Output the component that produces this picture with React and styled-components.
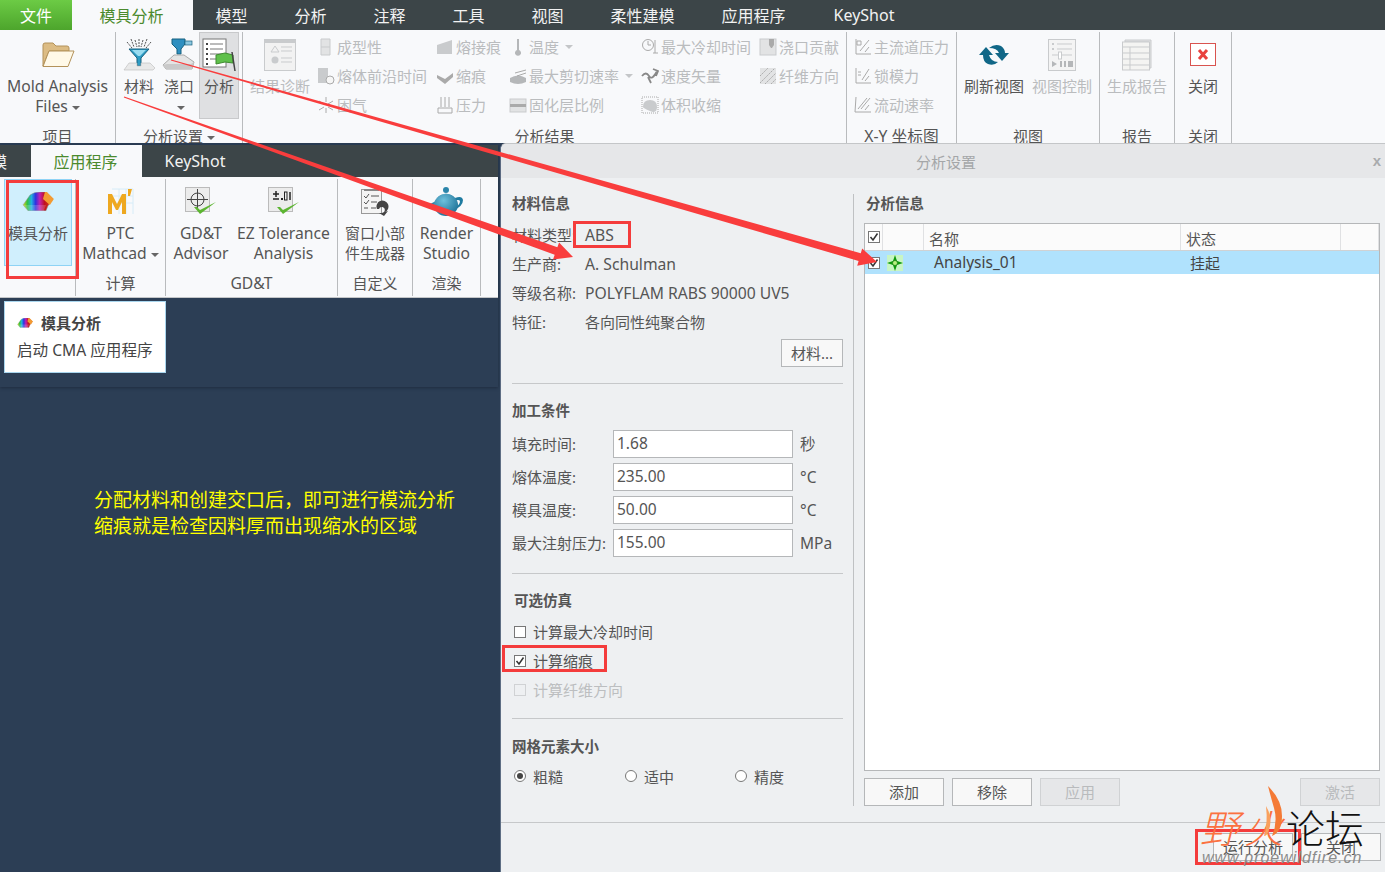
import React from "react";
import styled, { createGlobalStyle } from "styled-components";

const GlobalStyle = createGlobalStyle`
  html, body { margin: 0; padding: 0; background: #2c3e55; }
  body { font-family: "Noto Sans", "Noto Sans CJK SC", sans-serif; color: #555; }
  * { box-sizing: border-box; }
`;

/* ---------- icons ---------- */

const G1 = "#c9cbcd";
const G2 = "#e2e3e4";

function FolderIcon() {
  return (
    <svg width="34" height="26" viewBox="0 0 34 26">
      <path d="M2 24V3q0-2 2-2h8l3 3h11q2 0 2 2v3H8z" fill="#dcbc84" stroke="#b3925a" />
      <path d="M2 24.5 8 9h25l-6 15.500z" fill="#fff9e8" stroke="#b3925a" />
    </svg>
  );
}

function FunnelIcon() {
  return (
    <svg width="34" height="34" viewBox="0 0 34 34">
      <path d="M9 1l3 8M13 2l2 7M17 1v8M21 2l-2 7M25 1l-3 8M5 4l5 6M29 4l-5 6" stroke="#555" strokeWidth="1" strokeDasharray="2 1" />
      <path d="M7 11h20l-8 9v8h-4v-8z" fill="#2e9cc4" stroke="#17607e" />
      <path d="M10 12h14l-6 6h-2z" fill="#9adcf0" />
      <path d="M2 32l5-7h8v3h4v-3h9l5 5-2 2z" fill="#e9e9e9" stroke="#bbb" strokeWidth=".6" />
    </svg>
  );
}

function GateIcon() {
  return (
    <svg width="34" height="34" viewBox="0 0 34 34">
      <path d="M10 1h13v5l-4 5v5h-4v-5l-5-5z" fill="#2f8fc0" stroke="#17607e" />
      <rect x="23" y="3" width="7" height="4" fill="#8cc8e0" stroke="#17607e" strokeWidth=".7" />
      <path d="M1 27l11-10h10l10 7-2 7H4z" fill="#e4e4e4" stroke="#aaa" />
      <path d="M1 27l3 4h26l2-7-3 2H5z" fill="#c9c9c9" />
    </svg>
  );
}

function AnalysisIcon() {
  return (
    <svg width="34" height="34" viewBox="0 0 34 34">
      <rect x="1" y="1" width="23" height="28" fill="#fff" stroke="#777" />
      <path d="M8 6h13M8 11h13M8 16h13M8 21h8" stroke="#777" />
      <path d="M4 6h2M4 11h2M4 16h2M4 21h2M4 26h2" stroke="#444" strokeWidth="2" />
      <path d="M14 17l9-2 8 2v8l-8-1-9 2z" fill="#5fc04b" stroke="#3e8b30" />
      <path d="M30 14l3 19" stroke="#444" strokeWidth="1.500" />
    </svg>
  );
}

function DiagnoseIcon() {
  return (
    <svg width="32" height="32" viewBox="0 0 32 32">
      <rect x=".5" y=".5" width="31" height="31" fill="#f2f2f2" stroke={G1} />
      <path d="M1 1h30v3H1z" fill={G1} />
      <path d="M7 13l4-6 4 6z" fill="none" stroke={G1} />
      <circle cx="11" cy="21" r="3.500" fill={G1} />
      <path d="M17 8h11M17 12h11M17 19h11M17 23h11" stroke={G1} />
    </svg>
  );
}

function RefreshIcon() {
  return (
    <svg width="30" height="22" viewBox="0 0 30 22" fill="#116787">
      <path d="M0 11h14L7 3z" />
      <path d="M16 9h14l-7 8z" />
      <path d="M10 4Q16-1 22 2q4 3 4 7h-6q-2-5-10-5z" />
      <path d="M4 11h6q2 7 9 7-4 4-10 2-5-2-5-9z" />
    </svg>
  );
}

function ViewControlIcon() {
  return (
    <svg width="28" height="32" viewBox="0 0 28 32">
      <rect x=".5" y=".5" width="27" height="31" fill="#f4f4f4" stroke={G1} />
      <path d="M9 5h15M9 10h15M4 16h20" stroke={G1} />
      <path d="M4 4h2v2H4zM4 9h2v2H4z" fill={G1} />
      <rect x="10.500" y="13" width="3" height="7" fill="#fff" stroke={G1} />
      <path d="M4 22l5 3-5 3zM12 22h2v6h-2zM16 22h2v6h-2zM20 22h5v6h-5z" fill="#b5b7b9" />
    </svg>
  );
}

function ReportIcon() {
  return (
    <svg width="30" height="32" viewBox="0 0 30 32">
      <path d="M3 1h26v28H27V3H3z" fill={G2} stroke={G1} />
      <rect x=".5" y="3" width="27" height="28" fill="#f4f4f2" stroke={G1} />
      <path d="M1 8h26M1 14h26M1 20h26M1 26h26M8 8v23" stroke={G1} />
    </svg>
  );
}

function CloseIcon() {
  return (
    <svg width="26" height="23" viewBox="0 0 26 23">
      <rect x=".5" y=".5" width="25" height="22" fill="#fff" stroke="#d9534f" />
      <path d="M9 7l8 9M17 7l-8 9" stroke="#e8413e" strokeWidth="3" />
    </svg>
  );
}

function RainbowIcon({ small }) {
  const w = small ? 16 : 32;
  const id = small ? "rb-s" : "rb-l";
  return (
    <svg width={w} height={w * 0.62} viewBox="0 0 32 20">
      <defs>
        <linearGradient id={id} x1="0" x2="1" y1="0.5" y2="0.5">
          <stop offset="0" stopColor="#d8d820" />
          <stop offset=".14" stopColor="#30c040" />
          <stop offset=".28" stopColor="#20b0e0" />
          <stop offset=".42" stopColor="#3030e0" />
          <stop offset=".56" stopColor="#c020b0" />
          <stop offset=".72" stopColor="#c01020" />
          <stop offset="1" stopColor="#e05010" />
        </linearGradient>
      </defs>
      <path d="M1 13 8 3q4-3 10-3h6l7 7-5 7-2 5H6z" fill={`url(#${id})`} stroke="#888" strokeWidth=".5" />
      <path d="M23 0h2l7 7-4 6-7-6z" fill="#f39a32" />
      <path d="M1 13h23l-2 6H5z" fill="#fff" opacity=".18" />
    </svg>
  );
}

function MathcadIcon() {
  return (
    <svg width="26" height="27" viewBox="0 0 26 27">
      <path d="M4 1h21v25M4 8h21M4 15h21M11 1v25M18 1v25" stroke="#d6ecf8" fill="none" />
      <path d="M0 26V6h4l5 10 5-10h4v20h-4V14l-4 8H8l-4-8v12z" fill="#eea820" />
      <path d="M20 1h4l-2 7h-2z" fill="#eea820" />
    </svg>
  );
}

function GdtIcon() {
  return (
    <svg width="32" height="30" viewBox="0 0 32 30">
      <rect x=".5" y=".5" width="24" height="24" fill="#ececec" stroke="#bbb" />
      <circle cx="12.500" cy="12.500" r="6.500" fill="none" stroke="#444" />
      <path d="M12.500 2v21M2 12.500h21" stroke="#444" />
      <path d="M9 20l6 7L31 15l-16 8-3-3z" fill="#5cb531" />
    </svg>
  );
}

function EzIcon() {
  return (
    <svg width="32" height="30" viewBox="0 0 32 30">
      <rect x=".5" y=".5" width="24" height="24" fill="#ececec" stroke="#bbb" />
      <path d="M5 7h6M8 4v6M5 12h6" stroke="#222" strokeWidth="1.500" />
      <path d="M13 11h2v2h-2z" fill="#222" />
      <rect x="16.500" y="5" width="2.500" height="8" fill="none" stroke="#222" />
      <path d="M22 5v8" stroke="#222" strokeWidth="1.500" />
      <path d="M9 20l6 7L31 15l-16 8-3-3z" fill="#5cb531" />
    </svg>
  );
}

function WidgetIcon() {
  return (
    <svg width="28" height="28" viewBox="0 0 28 28">
      <rect x=".5" y="1.500" width="20" height="24" fill="#f4f4f4" stroke="#999" />
      <path d="M3 1h15v2H3z" fill="#888" />
      <path d="M3 8l2 2 3-4M3 14l2 2 3-4M10 8h8M10 14h6M10 20h5M3 20h4" stroke="#555" fill="none" />
      <path d="M16 21a6 6 0 1 1 8 3l3-1-4 5-5-3 3 0a3 3 0 1 0-3-4z" fill="#444" />
    </svg>
  );
}

function TeapotIcon() {
  return (
    <svg width="33" height="30" viewBox="0 0 33 30">
      <defs>
        <radialGradient id="pot" cx=".4" cy=".3" r=".8">
          <stop offset="0" stopColor="#6fc0dc" />
          <stop offset="1" stopColor="#146a90" />
        </radialGradient>
      </defs>
      <circle cx="16" cy="3" r="3" fill="#2b85aa" />
      <path d="M8 10q8-7 16 0z" fill="url(#pot)" />
      <path d="M25 11q7-3 8 2 0 6-9 10l1-3q5-2 5-6-1-2-6 0z" fill="#1e7ba0" />
      <path d="M8 13 0 17l8 8z" fill="#2b85aa" />
      <ellipse cx="16" cy="18" rx="12" ry="11" fill="url(#pot)" />
    </svg>
  );
}

function StarIcon() {
  return (
    <svg width="16" height="16" viewBox="0 0 16 16">
      <rect width="16" height="16" fill="#c8f5c4" />
      <path d="M8 0l2 6 6 2-6 2-2 6-2-6-6-2 6-2z" fill="#0d9a0d" />
      <circle cx="8" cy="8" r="2.500" fill="#b8f080" stroke="#0d7a0d" strokeWidth=".7" />
    </svg>
  );
}

/* little disabled ribbon glyphs, all in the same grey */
const smallGlyphs = {
  form: <path d="M4 1h9v16H4z M4 9h9" fill={G2} stroke={G1} />,
  front: <g><rect x="1" y="1" width="10" height="15" fill={G1} /><circle cx="13" cy="13" r="4" fill="#f6f6f6" stroke="#aaa" /></g>,
  trap: <path d="M9 1v5M9 12v5M2 5l5 3M16 5l-5 3M2 14l5-3M16 14l-5-3" stroke="#aaa" />,
  weld: <path d="M1 16V7l15-5v14z" fill={G1} />,
  sink: <path d="M1 8l8 4 8-6v4l-8 7-8-6z" fill="#aaa" />,
  pressure: <g stroke="#aaa" fill="none"><path d="M5 1v10M9 1v10M13 1v10M2 12h14v5H2z" /></g>,
  temp: <path d="M8 1h2v11a3 3 0 1 1-2 0z" fill="#b5b7b9" />,
  shear: <g fill="#b5b7b9"><path d="M1 11q8-5 16 0v4q-8 4-16 0z" /><path d="M6 6l11-3M8 9l9-3" stroke="#aaa" /></g>,
  frozen: <g><rect x="1" y="3" width="16" height="13" fill={G2} stroke={G1} /><rect x="1" y="8" width="16" height="3" fill="#aaa" /></g>,
  cool: <g fill="none" stroke="#aaa"><circle cx="7" cy="7" r="5.500" /><path d="M7 3v4h3M14 2v9M12 15h5M14 11v4" /></g>,
  velocity: <path d="M1 9q4-5 7 0t8-5M12 2l5 2-2 5M7 10l3 6" fill="none" stroke="#888" strokeWidth="1.800" />,
  shrink: <g><rect x="1" y="1" width="16" height="16" fill="none" stroke="#aaa" strokeDasharray="1 1" /><path d="M2 11q0-7 7-7t7 7-7 4-7-4z" fill={G1} /></g>,
  contrib: <g><rect x="1" y="1" width="16" height="16" fill={G2} stroke={G1} /><path d="M10 1h5v6l-2 3h-1l-2-3z" fill="#aaa" /></g>,
  fiber: <g><rect x="1" y="1" width="16" height="16" fill={G2} /><path d="M1 9l8-8M1 16L16 1M6 17l11-11M12 17l5-5" stroke="#aaa" strokeDasharray="2 1" /></g>,
  chartP: <path d="M2 1v15h15M6 13l9-11M11 14l4-5M3 3h4v4H3z" fill="none" stroke="#aaa" />,
  chartF: <path d="M2 1v15h15M8 13l7-11M11 14l4-5M4 5h3M4 8h3" fill="none" stroke="#aaa" />,
  chartQ: <path d="M2 1l-1 15h16M4 13l9-11M7 13l9-11M11 14l4-5" fill="none" stroke="#aaa" />,
};

function SmallGlyph({ name }) {
  return (
    <svg width="18" height="18" viewBox="0 0 18 18">
      {smallGlyphs[name]}
    </svg>
  );
}

/* ---------- ribbon parts ---------- */

const Page = styled.div`
  position: relative;
  width: 1385px;
  height: 872px;
  overflow: hidden;
  background: #2c3e55;
`;

const TabBar = styled.div`
  display: flex;
  height: ${(p) => p.$height || 30}px;
  background: #3c4548;
  flex: none;
`;

const FileTab = styled.div`
  width: 72px;
  display: flex;
  align-items: center;
  justify-content: center;
  background: linear-gradient(#6ccb45, #4da52c);
  color: #fff;
  font-size: 16px;
`;

const Tab = styled.div`
  display: flex;
  align-items: center;
  justify-content: center;
  font-size: 16px;
  padding-right: 2px;
  width: ${(p) => p.$w}px;
  color: ${(p) => (p.$active ? "#4b8a2d" : "#f2f2f2")};
  background: ${(p) => (p.$active ? "#f8f9fb" : "transparent")};
  white-space: nowrap;
`;

/* tab that is mostly hidden behind the left edge of the picture */
const CutTab = styled(Tab)`
  justify-content: flex-end;
  padding-right: 24px;
  overflow: hidden;
`;

const Ribbon = styled.div`
  display: flex;
  height: ${(p) => p.$height}px;
  background: #f8f9fb;
  overflow: hidden;
  flex: none;
  border-bottom: ${(p) => (p.$line ? "1px solid #c4c6c8" : "none")};
`;

const Group = styled.div`
  width: ${(p) => p.$w}px;
  flex: none;
  display: flex;
  flex-direction: column;
  margin-top: 2px;
  height: ${(p) => p.$h || 125}px;
  border-right: 1px solid #b9bbbd;
`;

const GroupBody = styled.div`
  display: flex;
  height: ${(p) => p.$h || 94}px;
  flex: none;
  padding-left: ${(p) => p.$pl || 0}px;
  justify-content: ${(p) => (p.$center ? "center" : "flex-start")};
`;

const GroupLabel = styled.div`
  height: 20px;
  line-height: 20px;
  text-align: center;
  font-size: ${(p) => (p.$latin ? 15.7 : 15)}px;
  color: #555;
  white-space: nowrap;
`;

const BigButton = styled.div`
  width: ${(p) => p.$w}px;
  flex: none;
  height: ${(p) => p.$h || 87}px;
  display: flex;
  flex-direction: column;
  align-items: center;
  font-size: ${(p) => (p.$latin ? 15.7 : 15)}px;
  line-height: 20px;
  text-align: center;
  white-space: nowrap;
  color: ${(p) => (p.$off ? "#babcbe" : "#555")};
  background: ${(p) => (p.$on ? "#dfe0e2" : p.$hot ? "#d0effd" : "transparent")};
  border: 1px solid ${(p) => (p.$on ? "#c8c9cb" : p.$hot ? "#8fd3f5" : "transparent")};
`;

const IconSlot = styled.div`
  height: 43px;
  display: flex;
  align-items: center;
  justify-content: center;
  flex: none;
`;

const Caret = styled.span`
  display: inline-block;
  width: 0;
  height: 0;
  margin-left: 4px;
  vertical-align: middle;
  border-left: 4px solid transparent;
  border-right: 4px solid transparent;
  border-top: 4px solid ${(p) => (p.$off ? "#c4c6c8" : "#666")};
`;

const SmallColumns = styled.div`
  display: flex;
  margin-left: 7px;
`;

const SmallColumn = styled.div`
  width: ${(p) => p.$w}px;
  flex: none;
  display: flex;
  flex-direction: column;
`;

const SmallItem = styled.div`
  height: 29px;
  display: flex;
  align-items: center;
  gap: 2px;
  font-size: 15px;
  color: #babcbe;
  white-space: nowrap;
`;

const columns = [
  { w: 119, items: [["form", "成型性"], ["front", "熔体前沿时间"], ["trap", "困气"]] },
  { w: 73, items: [["weld", "熔接痕"], ["sink", "缩痕"], ["pressure", "压力"]] },
  { w: 132, items: [["temp", "温度", true], ["shear", "最大剪切速率", true], ["frozen", "固化层比例"]] },
  { w: 118, items: [["cool", "最大冷却时间"], ["velocity", "速度矢量"], ["shrink", "体积收缩"]] },
  { w: 80, items: [["contrib", "浇口贡献"], ["fiber", "纤维方向"]] },
];

function SmallCol({ w, items }) {
  return (
    <SmallColumn $w={w}>
      {items.map(([icon, text, caret]) => (
        <SmallItem key={text}>
          <SmallGlyph name={icon} />
          {text}
          {caret && <Caret $off />}
        </SmallItem>
      ))}
    </SmallColumn>
  );
}

function MainRibbon() {
  return (
    <Ribbon $height={113}>
      <Group $w={116}>
        <GroupBody>
          <BigButton $w={115} $latin>
            <IconSlot><FolderIcon /></IconSlot>
            Mold Analysis
            <span>Files<Caret /></span>
          </BigButton>
        </GroupBody>
        <GroupLabel>项目</GroupLabel>
      </Group>
      <Group $w={127}>
        <GroupBody $pl={3}>
          <BigButton $w={40}><IconSlot><FunnelIcon /></IconSlot>材料</BigButton>
          <BigButton $w={40}><IconSlot><GateIcon /></IconSlot>浇口<span><Caret /></span></BigButton>
          <BigButton $w={40} $on><IconSlot><AnalysisIcon /></IconSlot>分析</BigButton>
        </GroupBody>
        <GroupLabel>分析设置<Caret /></GroupLabel>
      </Group>
      <Group $w={604}>
        <GroupBody $pl={7}>
          <BigButton $w={60} $off><IconSlot><DiagnoseIcon /></IconSlot>结果诊断</BigButton>
          <SmallColumns>
            {columns.map((c) => <SmallCol key={c.items[0][1]} {...c} />)}
          </SmallColumns>
        </GroupBody>
        <GroupLabel>分析结果</GroupLabel>
      </Group>
      <Group $w={110}>
        <GroupBody $pl={7}>
          <SmallCol w={100} items={[["chartP", "主流道压力"], ["chartF", "锁模力"], ["chartQ", "流动速率"]]} />
        </GroupBody>
        <GroupLabel $latin>X-Y 坐标图</GroupLabel>
      </Group>
      <Group $w={143}>
        <GroupBody $pl={3}>
          <BigButton $w={68}><IconSlot><RefreshIcon /></IconSlot>刷新视图</BigButton>
          <BigButton $w={68} $off><IconSlot><ViewControlIcon /></IconSlot>视图控制</BigButton>
        </GroupBody>
        <GroupLabel>视图</GroupLabel>
      </Group>
      <Group $w={75}>
        <GroupBody $center>
          <BigButton $w={70} $off><IconSlot><ReportIcon /></IconSlot>生成报告</BigButton>
        </GroupBody>
        <GroupLabel>报告</GroupLabel>
      </Group>
      <Group $w={57}>
        <GroupBody $center>
          <BigButton $w={50}><IconSlot><CloseIcon /></IconSlot>关闭</BigButton>
        </GroupBody>
        <GroupLabel>关闭</GroupLabel>
      </Group>
    </Ribbon>
  );
}

/* ---------- window behind the dialog ---------- */

const Desk = styled.div`
  display: flex;
  height: 729px;
`;

const BackSide = styled.div`
  width: 500px;
  flex: none;
  padding-top: 2px;
  background: #2c3e55;
`;

const BackWindow = styled.div`
  position: relative;
  width: 498px;
  height: 242px;
  display: flex;
  flex-direction: column;
  background: #2c3e55;
  box-shadow: 0 1px 3px rgba(20, 30, 45, 0.55);
`;

const Note = styled.div`
  margin: 100px 0 0 94px;
  color: #ffff00;
  font-size: 19px;
  line-height: 26px;
  white-space: nowrap;
`;

const Tip = styled.div`
  position: absolute;
  left: 4px;
  top: 156px;
  width: 162px;
  height: 72px;
  padding: 11px 0 0 12px;
  background: #fff;
  border: 1px solid #a9d6ee;
  font-size: 15.600px;
  line-height: 20px;
  color: #444;
  white-space: nowrap;
`;

const TipTitle = styled.div`
  display: flex;
  align-items: center;
  gap: 8px;
  font-size: 15px;
  font-weight: 700;
  height: 20px;
  margin-bottom: 7px;
`;

function BackRibbon() {
  return (
    <Ribbon $height={121} $line>
      <Group $w={76} $h={117}>
        <GroupBody $h={90} $pl={4}>
          <BigButton $w={68} $hot><IconSlot><RainbowIcon /></IconSlot>模具分析</BigButton>
        </GroupBody>
      </Group>
      <Group $w={90} $h={117}>
        <GroupBody $h={94} $center>
          <BigButton $w={88} $latin><IconSlot><MathcadIcon /></IconSlot>PTC<span>Mathcad<Caret /></span></BigButton>
        </GroupBody>
        <GroupLabel>计算</GroupLabel>
      </Group>
      <Group $w={172} $h={117}>
        <GroupBody $h={94}>
          <BigButton $w={70} $latin><IconSlot><GdtIcon /></IconSlot>GD&amp;T<span>Advisor</span></BigButton>
          <BigButton $w={95} $latin><IconSlot><EzIcon /></IconSlot>EZ Tolerance<span>Analysis</span></BigButton>
        </GroupBody>
        <GroupLabel $latin>GD&amp;T</GroupLabel>
      </Group>
      <Group $w={75} $h={117}>
        <GroupBody $h={94} $center>
          <BigButton $w={70}><IconSlot><WidgetIcon /></IconSlot>窗口小部<span>件生成器</span></BigButton>
        </GroupBody>
        <GroupLabel>自定义</GroupLabel>
      </Group>
      <Group $w={68} $h={117}>
        <GroupBody $h={94} $center>
          <BigButton $w={66} $latin><IconSlot><TeapotIcon /></IconSlot>Render<span>Studio</span></BigButton>
        </GroupBody>
        <GroupLabel>渲染</GroupLabel>
      </Group>
    </Ribbon>
  );
}

/* ---------- dialog ---------- */

const Dialog = styled.div`
  flex: 1;
  display: flex;
  flex-direction: column;
  background: #eef0f2;
  border-left: 1px solid #5e6e84;
  border-top-left-radius: 6px;
  border-top: 1px solid #c4c6c8;
  overflow: hidden;
`;

const TitleBar = styled.div`
  height: 34px;
  flex: none;
  display: flex;
  align-items: center;
  justify-content: center;
  padding-left: 6px;
  position: relative;
  background: #e6e7e9;
  font-size: 15px;
  color: #a4a6a8;
`;

const CloseX = styled.span`
  position: absolute;
  right: 4px;
  top: 8px;
  font: 700 15px "Liberation Sans", sans-serif;
  color: #a9abad;
`;

const DialogBody = styled.div`
  display: flex;
  height: 612px;
  margin-top: 16px;
  flex: none;
`;

const LeftPane = styled.div`
  width: 353px;
  flex: none;
  padding: 0 10px 0 11px;
  border-right: 1px solid #bfc1c3;
`;

const RightPane = styled.div`
  flex: 1;
  display: flex;
  flex-direction: column;
  padding: 0 5px 0 10px;
`;

const Heading = styled.div`
  height: 18px;
  line-height: 18px;
  font-size: 14.500px;
  font-weight: 700;
  color: #555;
  margin-top: ${(p) => p.$mt || 0}px;
  padding-left: ${(p) => p.$pl || 0}px;
`;

const Rule = styled.div`
  height: 1px;
  background: #c6c8ca;
  margin-top: ${(p) => p.$mt}px;
`;

const InfoRows = styled.div`
  margin-top: 9px;
`;

const InfoRow = styled.div`
  height: 29px;
  padding-bottom: 2px;
  display: flex;
  align-items: center;
  font-size: 15px;
  color: #555;
`;

const InfoValue = styled.span`
  font-size: ${(p) => (p.$cjk ? 15 : 15.7)}px;
`;

const InfoLabel = styled.span`
  width: 73px;
  flex: none;
`;

const RightAlign = styled.div`
  display: flex;
  justify-content: flex-end;
  margin-top: 2px;
`;

const Button = styled.div`
  width: ${(p) => p.$w || 80}px;
  height: 28px;
  padding-bottom: 2px;
  display: flex;
  align-items: center;
  justify-content: center;
  font-size: 15px;
  color: ${(p) => (p.$off ? "#b9bbbd" : "#555")};
  background: ${(p) => (p.$off ? "#e6e7e9" : "#f8f8f8")};
  border: 1px solid ${(p) => (p.$off ? "#d0d2d4" : "#b5b7b9")};
`;

const Fields = styled.div`
  margin-top: 11px;
  display: flex;
  flex-direction: column;
  gap: 5px;
`;

const FieldRow = styled.div`
  height: 28px;
  display: flex;
  align-items: center;
  font-size: 15px;
  color: #555;
`;

const FieldLabel = styled.span`
  width: 101px;
  flex: none;
  white-space: nowrap;
  padding-bottom: 2px;
`;

const FieldInput = styled.div`
  width: 180px;
  height: 28px;
  line-height: 25px;
  padding-left: 3px;
  background: #fff;
  border: 1px solid #b5b7b9;
  font-size: 15.500px;
`;

const Unit = styled.span`
  margin-left: 7px;
  padding-bottom: 1px;
  font-size: 15.500px;
`;

const CheckRows = styled.div`
  margin-top: 9px;
`;

const CheckRow = styled.div`
  height: 29px;
  display: flex;
  align-items: center;
  gap: 7px;
  padding: 0 0 2px 2px;
  font-size: 15px;
  color: ${(p) => (p.$off ? "#bcbec0" : "#555")};
`;

const Box = styled.span`
  width: 12px;
  height: 12px;
  flex: none;
  display: flex;
  background: ${(p) => (p.$off ? "#eef0f2" : "#fff")};
  border: 1px solid ${(p) => (p.$off ? "#d0d2d4" : "#777")};
`;

const Radios = styled.div`
  display: grid;
  grid-template-columns: 111px 110px 1fr;
  height: 28px;
  margin-top: 8px;
  padding: 0 0 2px 2px;
`;

const RadioItem = styled.div`
  display: flex;
  align-items: center;
  gap: 7px;
  font-size: 15px;
  color: #555;
`;

const RadioDot = styled.span`
  width: 12px;
  height: 12px;
  border-radius: 50%;
  background: #fff;
  border: 1px solid #777;
  display: flex;
  align-items: center;
  justify-content: center;
  &::after {
    content: "";
    width: 6px;
    height: 6px;
    border-radius: 50%;
    background: ${(p) => (p.$on ? "#444" : "transparent")};
  }
`;

const Tick = () => (
  <svg width="10" height="10" viewBox="0 0 10 10">
    <path d="M1.500 5l2.500 3 4.500-6.500" fill="none" stroke="#333" strokeWidth="1.500" />
  </svg>
);

const Table = styled.div`
  height: 548px;
  margin-top: 11px;
  flex: none;
  background: #fff;
  border: 1px solid #b5b7b9;
  font-size: 15px;
  color: #555;
`;

const tableCols = "18px 41px 257px 160px 1fr";

const HeadRow = styled.div`
  display: grid;
  grid-template-columns: ${tableCols};
  height: 27px;
  background: #fbfbfb;
  border-bottom: 1px solid #d0d2d4;
`;

const HeadCell = styled.div`
  display: flex;
  align-items: ${(p) => (p.$top ? "center" : "flex-end")};
  padding-left: ${(p) => p.$pl || 0}px;
  border-right: 1px solid #e0e1e3;
  line-height: 22px;
`;

const DataRow = styled.div`
  display: grid;
  grid-template-columns: ${tableCols};
  height: 23px;
  background: #b0e2fd;
  color: #444;
`;

const DataCell = styled.div`
  display: flex;
  align-items: center;
  padding-left: ${(p) => p.$pl || 0}px;
  padding-bottom: ${(p) => (p.$text ? 2 : 0)}px;
  font-size: ${(p) => (p.$latin ? 15.5 : 15)}px;
`;

const ButtonRow = styled.div`
  display: flex;
  gap: 8px;
  margin-top: 7px;
`;

const Spacer = styled.div`
  flex: 1;
`;

const Footer = styled.div`
  margin-top: 16px;
  padding: 10px 4px 0 0;
  border-top: 1px solid #c6c8ca;
  display: flex;
  justify-content: flex-end;
  gap: 8px;
`;

/* ---------- things drawn over the page ---------- */

const Overlay = styled.svg`
  position: absolute;
  inset: 0;
  pointer-events: none;
`;

const RedBox = styled.div`
  position: absolute;
  left: ${(p) => p.$x}px;
  top: ${(p) => p.$y}px;
  width: ${(p) => p.$w}px;
  height: ${(p) => p.$h}px;
  border: 3px solid #f43c3c;
  pointer-events: none;
`;

const Mark = styled.div`
  position: absolute;
  left: 1200px;
  top: 804px;
  width: 180px;
  height: 64px;
  pointer-events: none;
`;

const MarkFire = styled.span`
  position: absolute;
  left: 0;
  top: -6px;
  font-size: 39px;
  font-weight: 300;
  font-style: italic;
  letter-spacing: 5px;
  color: #fb7140;
  white-space: nowrap;
`;

const MarkName = styled.span`
  position: absolute;
  left: 86px;
  top: -6px;
  font-size: 39px;
  font-weight: 300;
  color: #111;
  white-space: nowrap;
`;

const MarkUrl = styled.span`
  position: absolute;
  left: 2px;
  top: 45px;
  font: italic 16px "Liberation Sans", sans-serif;
  letter-spacing: 1px;
  color: #8c8c8c;
  white-space: nowrap;
`;

const MarkFlame = styled.svg`
  position: absolute;
  left: 60px;
  top: -18px;
`;

function arrowPoints([sx, sy], [tx, ty], endW = 8, headLen = 18, headW = 9) {
  const len = Math.hypot(tx - sx, ty - sy);
  const dx = (tx - sx) / len;
  const dy = (ty - sy) / len;
  const nx = -dy;
  const ny = dx;
  const neckX = tx - dx * headLen;
  const neckY = ty - dy * headLen;
  const pts = [
    [sx + nx * 0.5, sy + ny * 0.5],
    [neckX + nx * endW * 0.5, neckY + ny * endW * 0.5],
    [neckX + nx * headW, neckY + ny * headW],
    [tx, ty],
    [neckX - nx * headW, neckY - ny * headW],
    [neckX - nx * endW * 0.5, neckY - ny * endW * 0.5],
    [sx - nx * 0.5, sy - ny * 0.5],
  ];
  return pts.map((p) => p.join(",")).join(" ");
}

export default function App() {
  return (
    <Page>
      <GlobalStyle />
      <TabBar>
        <FileTab>文件</FileTab>
        <Tab $w={121} $active>模具分析</Tab>
        {[["模型", 79], ["分析", 79], ["注释", 79], ["工具", 79], ["视图", 79], ["柔性建模", 111], ["应用程序", 111], ["KeyShot", 110]].map(([t, w]) => (
          <Tab key={t} $w={w}>{t}</Tab>
        ))}
      </TabBar>
      <MainRibbon />
      <Desk>
        <BackSide>
          <BackWindow>
            <TabBar $height={32}>
              <CutTab $w={31}>模</CutTab>
              <Tab $w={111} $active>应用程序</Tab>
              <Tab $w={108}>KeyShot</Tab>
            </TabBar>
            <BackRibbon />
            <Tip>
              <TipTitle><RainbowIcon small />模具分析</TipTitle>
              启动 CMA 应用程序
            </Tip>
          </BackWindow>
          <Note>
            分配材料和创建交口后，即可进行模流分析
            <br />
            缩痕就是检查因料厚而出现缩水的区域
          </Note>
        </BackSide>
        <Dialog>
          <TitleBar>
            分析设置
            <CloseX>x</CloseX>
          </TitleBar>
          <DialogBody>
            <LeftPane>
              <Heading>材料信息</Heading>
              <InfoRows>
                <InfoRow><InfoLabel>材料类型:</InfoLabel><InfoValue>ABS</InfoValue></InfoRow>
                <InfoRow><InfoLabel>生产商:</InfoLabel><InfoValue>A. Schulman</InfoValue></InfoRow>
                <InfoRow><InfoLabel>等级名称:</InfoLabel><InfoValue>POLYFLAM RABS 90000 UV5</InfoValue></InfoRow>
                <InfoRow><InfoLabel>特征:</InfoLabel><InfoValue $cjk>各向同性纯聚合物</InfoValue></InfoRow>
              </InfoRows>
              <RightAlign><Button $w={62}>材料...</Button></RightAlign>
              <Rule $mt={16} />
              <Heading $mt={17}>加工条件</Heading>
              <Fields>
                <FieldRow><FieldLabel>填充时间:</FieldLabel><FieldInput>1.68</FieldInput><Unit>秒</Unit></FieldRow>
                <FieldRow><FieldLabel>熔体温度:</FieldLabel><FieldInput>235.00</FieldInput><Unit>°C</Unit></FieldRow>
                <FieldRow><FieldLabel>模具温度:</FieldLabel><FieldInput>50.00</FieldInput><Unit>°C</Unit></FieldRow>
                <FieldRow><FieldLabel>最大注射压力:</FieldLabel><FieldInput>155.00</FieldInput><Unit>MPa</Unit></FieldRow>
              </Fields>
              <Rule $mt={16} />
              <Heading $mt={17} $pl={2}>可选仿真</Heading>
              <CheckRows>
                <CheckRow><Box />计算最大冷却时间</CheckRow>
                <CheckRow><Box><Tick /></Box>计算缩痕</CheckRow>
                <CheckRow $off><Box $off />计算纤维方向</CheckRow>
              </CheckRows>
              <Rule $mt={13} />
              <Heading $mt={18}>网格元素大小</Heading>
              <Radios>
                <RadioItem><RadioDot $on />粗糙</RadioItem>
                <RadioItem><RadioDot />适中</RadioItem>
                <RadioItem><RadioDot />精度</RadioItem>
              </Radios>
            </LeftPane>
            <RightPane>
              <Heading $pl={2}>分析信息</Heading>
              <Table>
                <HeadRow>
                  <HeadCell $top $pl={3}><Box><Tick /></Box></HeadCell>
                  <HeadCell />
                  <HeadCell $pl={5}>名称</HeadCell>
                  <HeadCell $pl={5}>状态</HeadCell>
                  <HeadCell />
                </HeadRow>
                <DataRow>
                  <DataCell $pl={3}><Box><Tick /></Box></DataCell>
                  <DataCell $pl={4}><StarIcon /></DataCell>
                  <DataCell $pl={10} $latin $text>Analysis_01</DataCell>
                  <DataCell $pl={9} $text>挂起</DataCell>
                  <DataCell />
                </DataRow>
              </Table>
              <ButtonRow>
                <Button>添加</Button>
                <Button>移除</Button>
                <Button $off>应用</Button>
                <Spacer />
                <Button $off>激活</Button>
              </ButtonRow>
            </RightPane>
          </DialogBody>
          <Footer>
            <Button>运行分析</Button>
            <Button>关闭</Button>
          </Footer>
        </Dialog>
      </Desk>
      <RedBox $x={6} $y={180} $w={73} $h={99} />
      <RedBox $x={573} $y={221} $w={58} $h={27} />
      <RedBox $x={502} $y={645} $w={105} $h={27} />
      <RedBox $x={1195} $y={829} $w={106} $h={36} />
      <Overlay width="1385" height="872">
        <polygon fill="#f93d3d" points={arrowPoints([124, 97], [573, 257])} />
        <polygon fill="#f93d3d" points={arrowPoints([171, 60], [877, 262])} />
      </Overlay>
      <Mark>
        <MarkFire>野火</MarkFire>
        <MarkFlame width="24" height="52" viewBox="0 0 24 52">
          <path d="M8 0q14 14 14 30T12 50q6-14 2-28T8 0z" fill="#f47a36" />
          <path d="M6 20q6 10 4 20t-6 10q4-12 2-30z" fill="#f9a05e" />
        </MarkFlame>
        <MarkName>论坛</MarkName>
        <MarkUrl>www.proewildfire.cn</MarkUrl>
      </Mark>
    </Page>
  );
}
